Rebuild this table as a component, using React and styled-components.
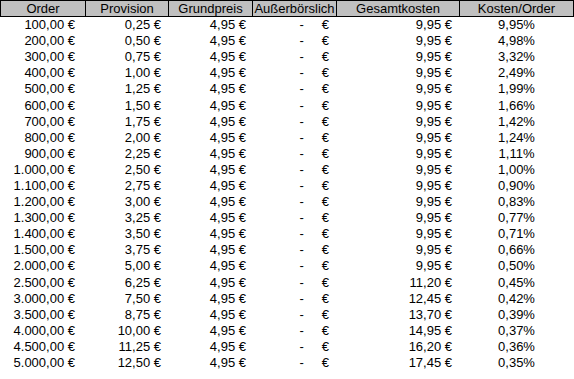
import React from "react";
import styled, { createGlobalStyle } from "styled-components";

const Global = createGlobalStyle`
  html, body { margin: 0; padding: 0; background: #ffffff; }
  body { font-family: "Liberation Sans", Arial, sans-serif; }
`;

const Sheet = styled.div`
  display: grid;
  grid-template-columns: 85px 83px 84px 84px 123px 115px;
  grid-template-rows: 17px;
  grid-auto-rows: 16.1px;
  width: 574px;
  font-family: "Liberation Sans", Arial, sans-serif;
  font-size: 13px;
  color: #000000;
`;

const HeaderCell = styled.div`
  height: 17px;
  box-sizing: border-box;
  background: #c0c0c0;
  border-top: 1px solid #000;
  border-bottom: 1px solid #000;
  border-left: 1px solid #000;
  border-right: ${(p) => (p.$last ? "1px solid #000" : "none")};
  display: flex;
  align-items: center;
  justify-content: center;
  line-height: 15px;
  white-space: nowrap;
  overflow: hidden;
`;

const HeaderRow = styled.div`
  display: contents;
`;

const Cell = styled.div`
  display: flex;
  align-items: center;
  justify-content: ${(p) => (p.$center ? "center" : "flex-end")};
  padding-right: ${(p) => p.$pad || 0}px;
  line-height: 16px;
  white-space: nowrap;
`;

const Dash = styled.span`
  margin-right: 18px;
`;

const rows = [
  ["100,00 €", "0,25 €", "9,95 €", "9,95%"],
  ["200,00 €", "0,50 €", "9,95 €", "4,98%"],
  ["300,00 €", "0,75 €", "9,95 €", "3,32%"],
  ["400,00 €", "1,00 €", "9,95 €", "2,49%"],
  ["500,00 €", "1,25 €", "9,95 €", "1,99%"],
  ["600,00 €", "1,50 €", "9,95 €", "1,66%"],
  ["700,00 €", "1,75 €", "9,95 €", "1,42%"],
  ["800,00 €", "2,00 €", "9,95 €", "1,24%"],
  ["900,00 €", "2,25 €", "9,95 €", "1,11%"],
  ["1.000,00 €", "2,50 €", "9,95 €", "1,00%"],
  ["1.100,00 €", "2,75 €", "9,95 €", "0,90%"],
  ["1.200,00 €", "3,00 €", "9,95 €", "0,83%"],
  ["1.300,00 €", "3,25 €", "9,95 €", "0,77%"],
  ["1.400,00 €", "3,50 €", "9,95 €", "0,71%"],
  ["1.500,00 €", "3,75 €", "9,95 €", "0,66%"],
  ["2.000,00 €", "5,00 €", "9,95 €", "0,50%"],
  ["2.500,00 €", "6,25 €", "11,20 €", "0,45%"],
  ["3.000,00 €", "7,50 €", "12,45 €", "0,42%"],
  ["3.500,00 €", "8,75 €", "13,70 €", "0,39%"],
  ["4.000,00 €", "10,00 €", "14,95 €", "0,37%"],
  ["4.500,00 €", "11,25 €", "16,20 €", "0,36%"],
  ["5.000,00 €", "12,50 €", "17,45 €", "0,35%"],
];

const headers = ["Order", "Provision", "Grundpreis", "Außerbörslich", "Gesamtkosten", "Kosten/Order"];

export default function App() {
  return (
    <>
      <Global />
      <Sheet>
        <HeaderRow>
          {headers.map((h, i) => (
            <HeaderCell key={h} $last={i === headers.length - 1}>
              {h}
            </HeaderCell>
          ))}
        </HeaderRow>
        {rows.map((r) => (
          <React.Fragment key={r[0]}>
            <Cell $pad={10}>{r[0]}</Cell>
            <Cell $pad={7}>{r[1]}</Cell>
            <Cell $pad={6}>4,95 €</Cell>
            <Cell $pad={7}>
              <Dash>-</Dash>€
            </Cell>
            <Cell $pad={7}>{r[2]}</Cell>
            <Cell $center>{r[3]}</Cell>
          </React.Fragment>
        ))}
      </Sheet>
    </>
  );
}
